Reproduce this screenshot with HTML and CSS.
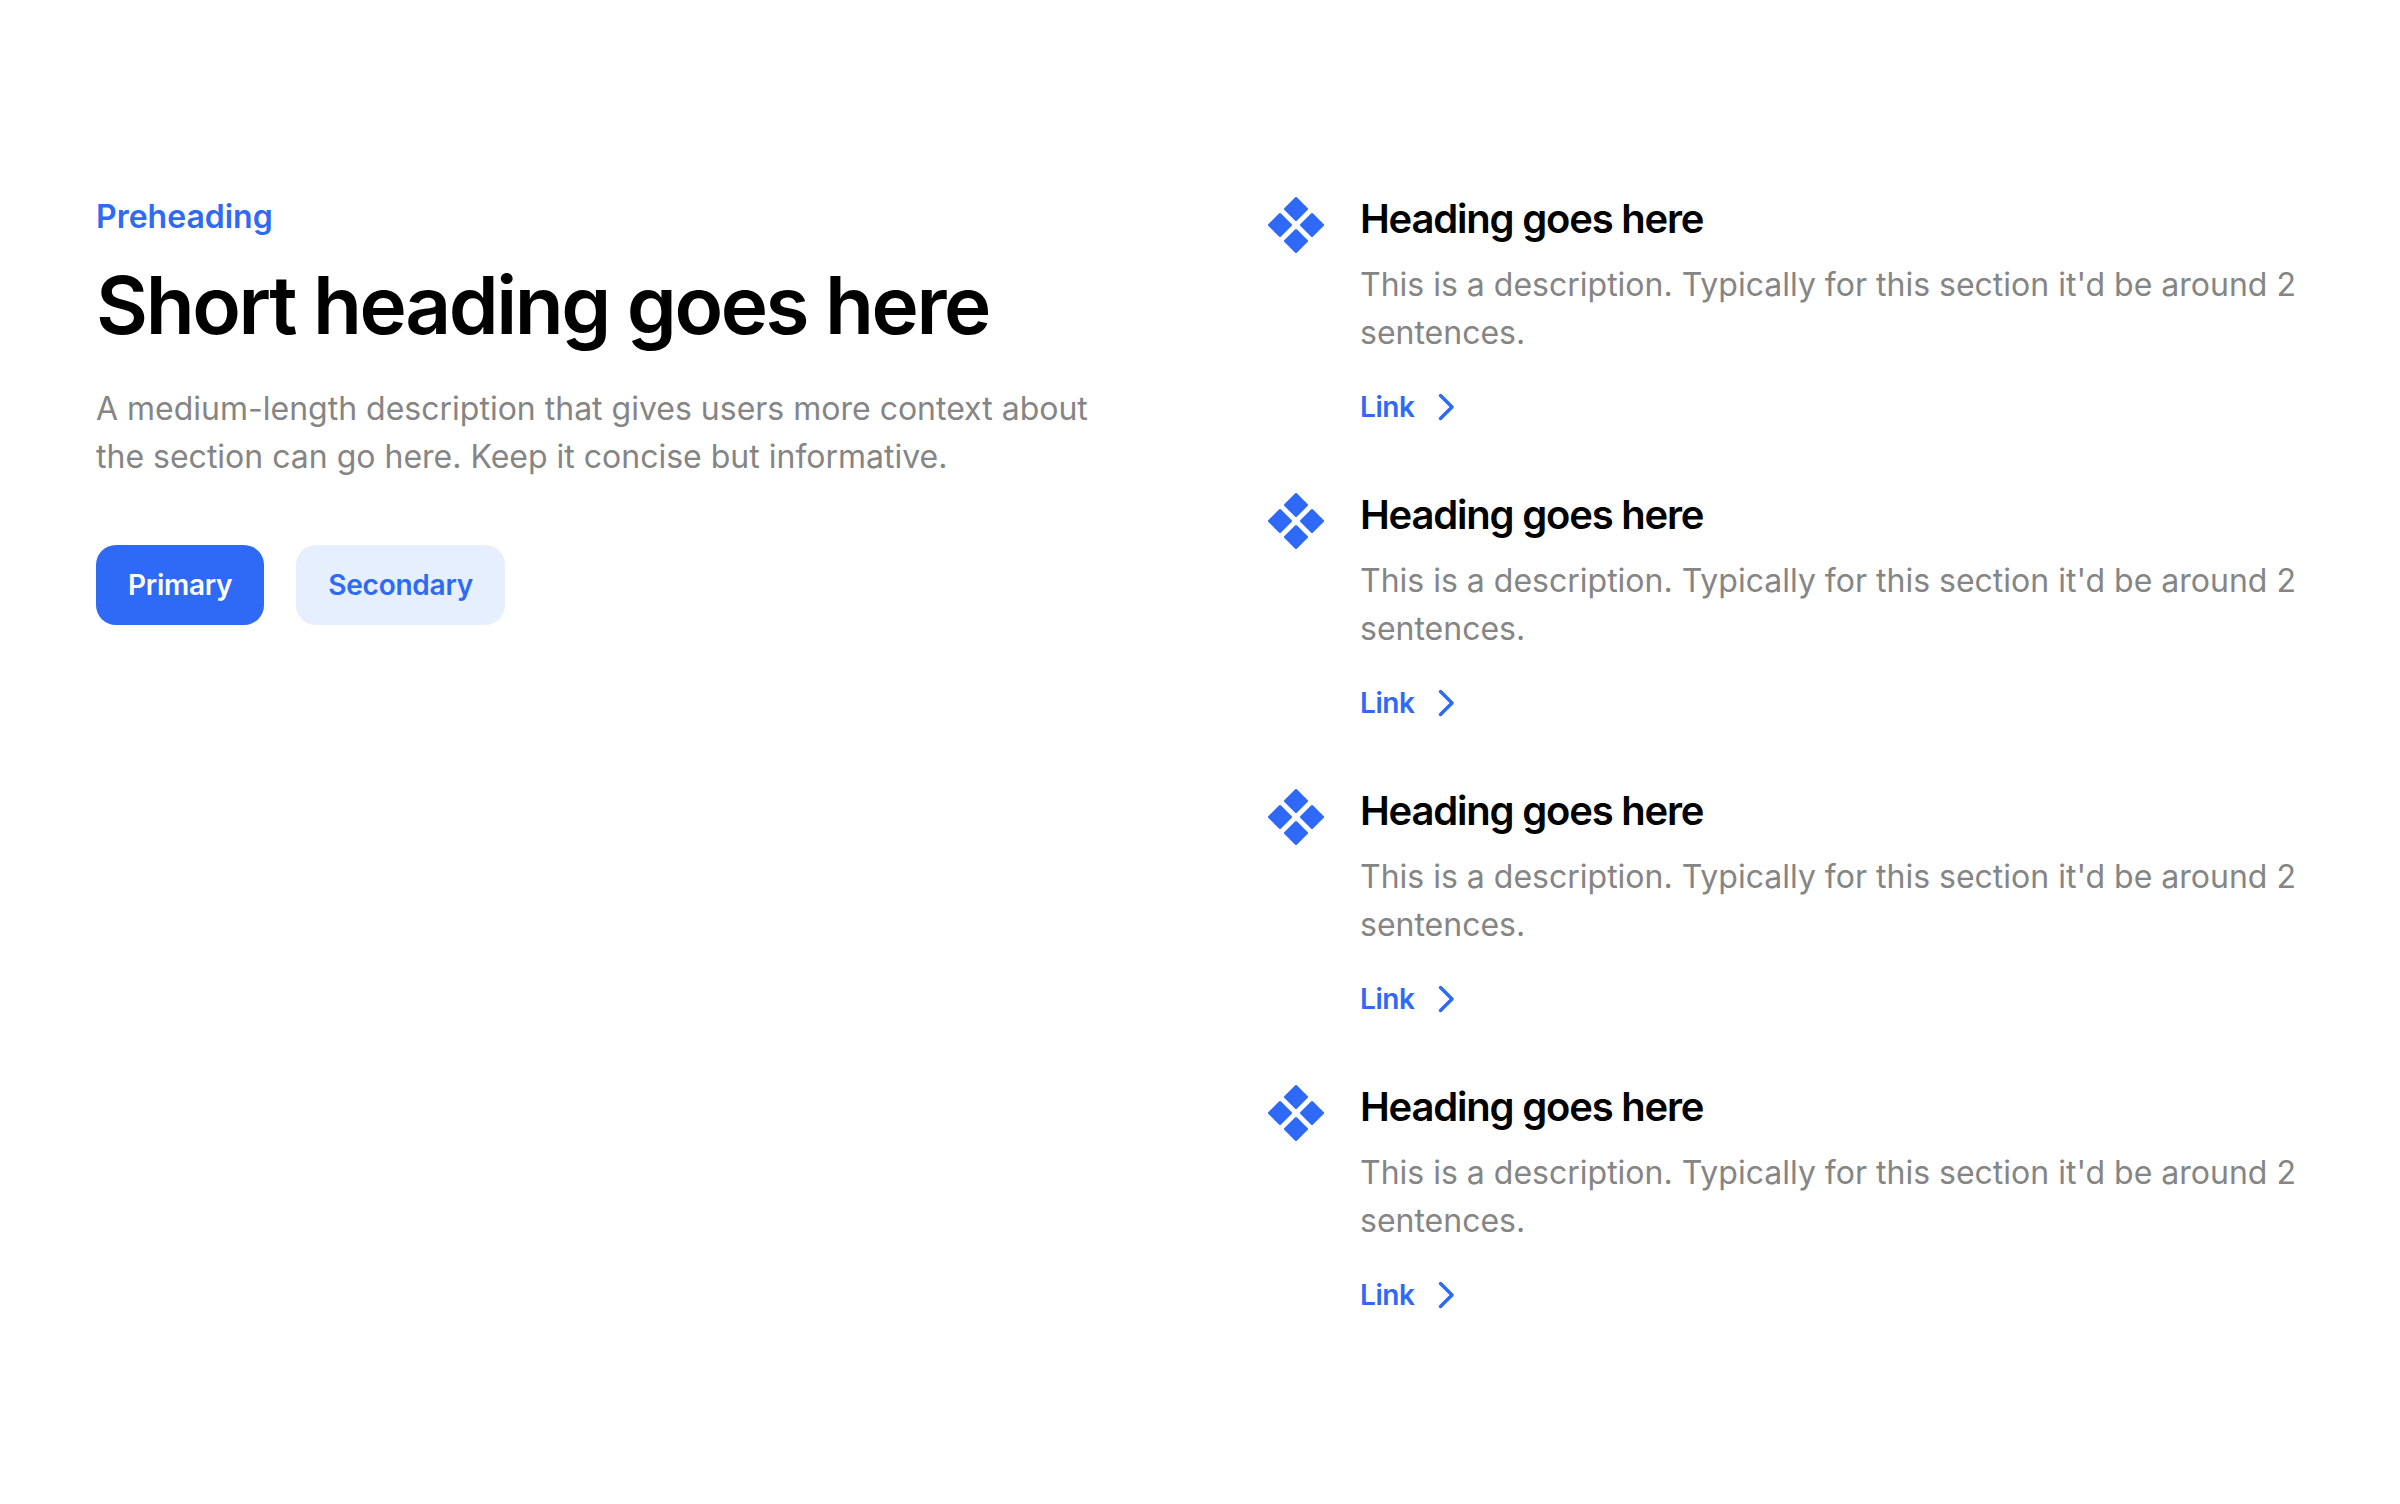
FILE: index.html
```html
<!DOCTYPE html>
<html lang="en">

<head>
    <meta charset="UTF-8">
    <title>Section</title>
    <link rel="stylesheet" href="styles.css">
</head>

<body>

    <section class="section">
        <div class="intro">
            <p class="preheading">Preheading</p>
            <h1 class="title">Short heading goes here</h1>
            <p class="lead">A medium-length description that gives users more context about the section can go here. Keep it concise but informative.</p>
            <div class="actions">
                <button class="btn btn-primary">Primary</button>
                <button class="btn btn-secondary">Secondary</button>
            </div>
        </div>

        <div class="list">
            <div class="item">
                <svg class="item-icon" viewBox="0 0 56 56"><use href="#diamonds" /></svg>
                <div class="item-body">
                    <h2 class="item-title">Heading goes here</h2>
                    <p class="item-text">This is a description. Typically for this section it'd be around 2 sentences.</p>
                    <a class="link" href="#">Link
                        <svg class="chevron" viewBox="0 0 24 32"><path d="M5.5 4.5 L17 16 L5.5 27.5" /></svg>
                    </a>
                </div>
            </div>
            <div class="item">
                <svg class="item-icon" viewBox="0 0 56 56"><use href="#diamonds" /></svg>
                <div class="item-body">
                    <h2 class="item-title">Heading goes here</h2>
                    <p class="item-text">This is a description. Typically for this section it'd be around 2 sentences.</p>
                    <a class="link" href="#">Link
                        <svg class="chevron" viewBox="0 0 24 32"><path d="M5.5 4.5 L17 16 L5.5 27.5" /></svg>
                    </a>
                </div>
            </div>
            <div class="item">
                <svg class="item-icon" viewBox="0 0 56 56"><use href="#diamonds" /></svg>
                <div class="item-body">
                    <h2 class="item-title">Heading goes here</h2>
                    <p class="item-text">This is a description. Typically for this section it'd be around 2 sentences.</p>
                    <a class="link" href="#">Link
                        <svg class="chevron" viewBox="0 0 24 32"><path d="M5.5 4.5 L17 16 L5.5 27.5" /></svg>
                    </a>
                </div>
            </div>
            <div class="item">
                <svg class="item-icon" viewBox="0 0 56 56"><use href="#diamonds" /></svg>
                <div class="item-body">
                    <h2 class="item-title">Heading goes here</h2>
                    <p class="item-text">This is a description. Typically for this section it'd be around 2 sentences.</p>
                    <a class="link" href="#">Link
                        <svg class="chevron" viewBox="0 0 24 32"><path d="M5.5 4.5 L17 16 L5.5 27.5" /></svg>
                    </a>
                </div>
            </div>
        </div>
    </section>

    <svg class="defs" width="0" height="0">
        <defs>
            <g id="diamonds">
                <path d="M28 1.5 L38.5 12 L28 22.5 L17.5 12 Z" />
                <path d="M28 33.5 L38.5 44 L28 54.5 L17.5 44 Z" />
                <path d="M12 17.5 L22.5 28 L12 38.5 L1.5 28 Z" />
                <path d="M44 17.5 L54.5 28 L44 38.5 L33.5 28 Z" />
            </g>
        </defs>
    </svg>

</body>

</html>
```

FILE: styles.css
```css
body {
    margin: 0;
    background: #fff;
    font-family: Inter, "Noto Sans", sans-serif;
}

.section {
    display: grid;
    grid-template-columns: 1172px 1036px;
    padding: 193px 96px 0;
}

.preheading {
    margin: 0 0 16px;
    font-size: 32px;
    line-height: 48px;
    font-weight: 600;
    color: #2e6af6;
}

.title {
    margin: 0 0 32px;
    font-size: 80px;
    line-height: 96px;
    font-weight: 600;
    letter-spacing: -2.4px;
    color: #000;
}

.lead {
    margin: 0 0 64px;
    width: 1010px;
    font-size: 32px;
    line-height: 48px;
    color: #858585;
}

.actions {
    display: flex;
    gap: 32px;
}

.btn {
    height: 80px;
    padding: 0 32px;
    border: none;
    border-radius: 20px;
    font-family: inherit;
    font-size: 28px;
    font-weight: 600;
    letter-spacing: -0.25px;
}

.btn-primary {
    background: #2e6af6;
    color: #fff;
}

.btn-secondary {
    background: #e6effd;
    color: #2e6af6;
}

.list {
    display: flex;
    flex-direction: column;
    gap: 58px;
}

.item {
    display: flex;
    gap: 36px;
}

.item-icon {
    flex: none;
    width: 56px;
    height: 56px;
    margin-top: 4px;
    fill: #2e6af6;
    stroke: #2e6af6;
    stroke-width: 3;
    stroke-linejoin: round;
}

.item-title {
    margin: 0 0 16px;
    font-size: 40px;
    line-height: 52px;
    font-weight: 600;
    letter-spacing: -1.2px;
    color: #000;
}

.item-text {
    margin: 0 0 26px;
    font-size: 32px;
    line-height: 48px;
    color: #858585;
}

.link {
    display: flex;
    align-items: center;
    gap: 20px;
    height: 48px;
    font-size: 28px;
    font-weight: 600;
    letter-spacing: -0.4px;
    color: #2e6af6;
    text-decoration: none;
}

.chevron {
    width: 24px;
    height: 32px;
    fill: none;
    stroke: #2e6af6;
    stroke-width: 3.5;
    stroke-linecap: round;
    stroke-linejoin: round;
}

.defs {
    position: absolute;
}
```
